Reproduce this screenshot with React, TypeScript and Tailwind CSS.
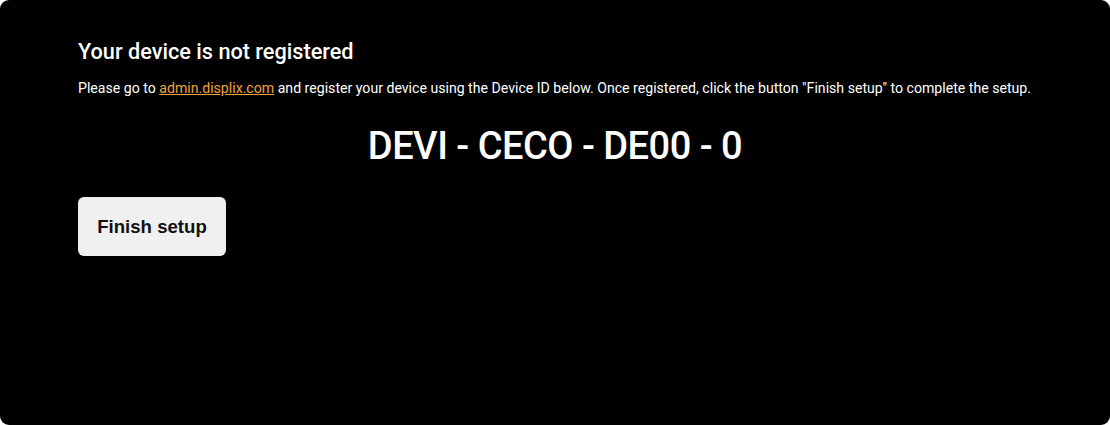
import React from "react";

export default function App() {
  return (
    <div className="w-[1110px] h-[425px] bg-white">
      <div className="w-full h-full bg-black rounded-[9px] px-[78px] pt-[38px] text-white font-['Roboto',sans-serif]">
        <h1 className="text-[21.7px] leading-[28px] font-medium">Your device is not registered</h1>
        <p className="mt-[12px] text-[14.12px] leading-[20px] whitespace-nowrap">
          Please go to{" "}
          <a href="#" className="text-[#f0a33a] underline">admin.displix.com</a>{" "}
          and register your device using the Device ID below. Once registered, click the button "Finish setup" to complete the setup.
        </p>
        <div className="mt-[23px] text-center text-[38px] leading-[50px] font-medium tracking-[-0.5px]">DEVI - CECO - DE00 - 0</div>
        <button className="mt-[26px] w-[148px] h-[59px] rounded-[6px] bg-[#f0f0f0] text-[#111] text-[18.6px] font-bold font-['Liberation_Sans',Arial,sans-serif]">
          Finish setup
        </button>
      </div>
    </div>
  );
}
